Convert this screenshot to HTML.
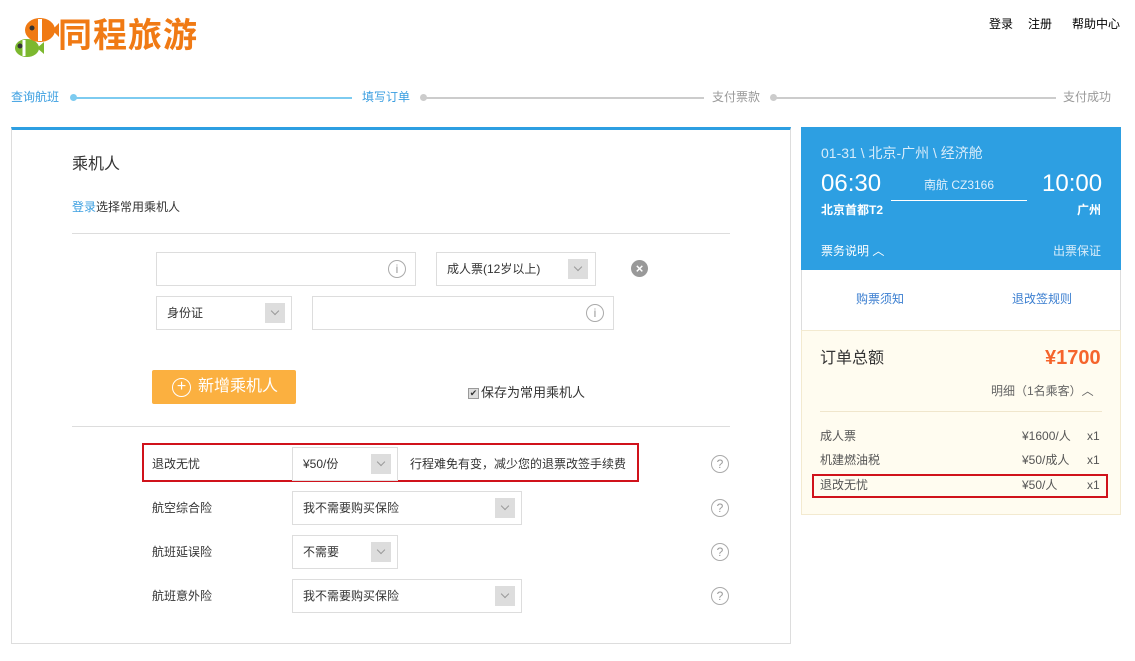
<!DOCTYPE html>
<html><head><meta charset="utf-8"><style>
*{margin:0;padding:0;box-sizing:border-box}
body{width:1135px;height:661px;background:#fff;font-family:"Liberation Sans","Noto Sans CJK SC",sans-serif;font-size:12px;color:#333;position:relative;overflow:hidden}
.a{position:absolute;white-space:nowrap;line-height:16px}
.box{position:absolute;border:1px solid #ddd;background:#fff}
.dd{position:absolute;width:20px;height:20px;background:#ddd}
.dd:after{content:"";position:absolute;left:7px;top:5px;width:5px;height:5px;border-right:1px solid #999;border-bottom:1px solid #999;transform:rotate(45deg)}
.ic{position:absolute;width:18px;height:18px;border:1px solid #aaa;border-radius:50%;color:#999;font-size:12px;text-align:center;line-height:16px}
</style></head><body>
<!-- logo -->
<svg class="a" style="left:10px;top:12px" width="50" height="48" viewBox="0 0 50 48">
<ellipse cx="17" cy="36" rx="12" ry="9" fill="#7cb82f"/><path d="M27 36l7-6v12z" fill="#7cb82f"/>
<path d="M14 28v16" stroke="#fff" stroke-width="3"/>
<circle cx="10" cy="34" r="2.5" fill="#333"/>
<ellipse cx="30" cy="18" rx="15" ry="12" fill="#f07a14"/><path d="M42 18l7-7v14z" fill="#f07a14"/>
<path d="M30 7v22" stroke="#fff" stroke-width="4"/><circle cx="22" cy="16" r="2.5" fill="#333"/>
</svg>
<div class="a" style="left:58px;top:16px;font-size:34px;line-height:40px;font-weight:bold;color:#f07a14;letter-spacing:1px">同程旅游</div>
<div class="a" style="left:989px;top:16px;font-size:12px;color:#000">登录</div>
<div class="a" style="left:1028px;top:16px;font-size:12px;color:#000">注册</div>
<div class="a" style="left:1072px;top:16px;font-size:12px;color:#000">帮助中心</div>
<!-- progress -->
<div class="a" style="left:11px;top:89px;color:#3a9ee0">查询航班</div>
<div class="a" style="left:70px;top:94px;width:7px;height:7px;border-radius:50%;background:#7dcbf0"></div>
<div class="a" style="left:74px;top:97px;width:278px;height:2px;background:#7dcbf0"></div>
<div class="a" style="left:362px;top:89px;color:#3a9ee0">填写订单</div>
<div class="a" style="left:420px;top:94px;width:7px;height:7px;border-radius:50%;background:#ccc"></div>
<div class="a" style="left:424px;top:97px;width:280px;height:2px;background:#ccc"></div>
<div class="a" style="left:712px;top:89px;color:#999">支付票款</div>
<div class="a" style="left:770px;top:94px;width:7px;height:7px;border-radius:50%;background:#ccc"></div>
<div class="a" style="left:774px;top:97px;width:282px;height:2px;background:#ccc"></div>
<div class="a" style="left:1063px;top:89px;color:#999">支付成功</div>
<!-- main panel -->
<div class="a" style="left:11px;top:127px;width:780px;height:517px;border:1px solid #ddd;border-top:3px solid #2d9fe2"></div>
<div class="a" style="left:72px;top:155px;font-size:16px;line-height:20px;color:#333">乘机人</div>
<div class="a" style="left:72px;top:199px;"><span style="color:#3a9ee0">登录</span>选择常用乘机人</div>
<div class="a" style="left:72px;top:233px;width:658px;height:1px;background:#ddd"></div>
<div class="box" style="left:156px;top:252px;width:260px;height:34px"></div>
<div class="ic" style="left:388px;top:260px">i</div>
<div class="box" style="left:436px;top:252px;width:160px;height:34px"></div>
<div class="a" style="left:447px;top:261px">成人票(12岁以上)</div>
<div class="dd" style="left:568px;top:259px"></div>
<div class="a" style="left:631px;top:260px;width:17px;height:17px;border-radius:50%;background:#999;color:#fff;font-size:13px;font-weight:bold;text-align:center;line-height:17px">×</div>
<div class="box" style="left:156px;top:296px;width:136px;height:34px"></div>
<div class="a" style="left:167px;top:305px">身份证</div>
<div class="dd" style="left:265px;top:303px"></div>
<div class="box" style="left:312px;top:296px;width:302px;height:34px"></div>
<div class="ic" style="left:586px;top:304px">i</div>
<div class="a" style="left:152px;top:370px;width:144px;height:34px;background:#fbb040;border-radius:2px;color:#fff;font-size:16px;line-height:34px;padding-left:46px">新增乘机人</div>
<div class="a" style="left:172px;top:378px;width:19px;height:19px;border:1.5px solid #fff;border-radius:50%;color:#fff;font-size:16px;text-align:center;line-height:15px">+</div>
<div class="a" style="left:468px;top:388px;width:11px;height:11px;background:#ddd;border:1px solid #999;font-size:9px;line-height:9px;text-align:center">✔</div>
<div class="a" style="left:481px;top:385px;font-size:13px">保存为常用乘机人</div>
<div class="a" style="left:72px;top:426px;width:658px;height:1px;background:#ddd"></div>
<!-- insurance -->
<div class="a" style="left:142px;top:443px;width:497px;height:39px;border:2px solid #d0121b"></div>
<div class="a" style="left:152px;top:456px">退改无忧</div>
<div class="box" style="left:292px;top:447px;width:106px;height:34px"></div>
<div class="a" style="left:303px;top:456px">¥50/份</div>
<div class="dd" style="left:371px;top:454px"></div>
<div class="a" style="left:410px;top:456px">行程难免有变，减少您的退票改签手续费</div>
<div class="ic" style="left:711px;top:455px">?</div>
<div class="a" style="left:152px;top:500px">航空综合险</div>
<div class="box" style="left:292px;top:491px;width:230px;height:34px"></div>
<div class="a" style="left:303px;top:500px">我不需要购买保险</div>
<div class="dd" style="left:495px;top:498px"></div>
<div class="ic" style="left:711px;top:499px">?</div>
<div class="a" style="left:152px;top:544px">航班延误险</div>
<div class="box" style="left:292px;top:535px;width:106px;height:34px"></div>
<div class="a" style="left:303px;top:544px">不需要</div>
<div class="dd" style="left:371px;top:542px"></div>
<div class="ic" style="left:711px;top:543px">?</div>
<div class="a" style="left:152px;top:588px">航班意外险</div>
<div class="box" style="left:292px;top:579px;width:230px;height:34px"></div>
<div class="a" style="left:303px;top:588px">我不需要购买保险</div>
<div class="dd" style="left:495px;top:586px"></div>
<div class="ic" style="left:711px;top:587px">?</div>
<!-- right panel -->
<div class="a" style="left:801px;top:127px;width:320px;height:143px;background:#2d9fe2"></div>
<div class="a" style="left:821px;top:144px;font-size:14px;line-height:18px;color:#d8ecfa">01-31 \ 北京-广州 \ 经济舱</div>
<div class="a" style="left:821px;top:170px;font-size:24px;line-height:28px;color:#fff">06:30</div>
<div class="a" style="left:1042px;top:170px;font-size:24px;line-height:28px;color:#fff">10:00</div>
<div class="a" style="left:924px;top:177px;color:#e0f0fc">南航 CZ3166</div>
<div class="a" style="left:891px;top:200px;width:136px;height:1px;background:#fff"></div>
<div class="a" style="left:821px;top:202px;color:#fff;font-weight:bold">北京首都T2</div>
<div class="a" style="left:1077px;top:202px;color:#fff;font-weight:bold">广州</div>
<div class="a" style="left:821px;top:243px;color:#fff">票务说明 ︿</div>
<div class="a" style="left:1053px;top:243px;color:#d8ecfa">出票保证</div>
<div class="a" style="left:801px;top:270px;width:320px;height:61px;border:1px solid #ddd;border-top:none"></div>
<div class="a" style="left:856px;top:291px;color:#3a7ed0">购票须知</div>
<div class="a" style="left:1012px;top:291px;color:#3a7ed0">退改签规则</div>
<div class="a" style="left:801px;top:330px;width:320px;height:185px;background:#fffcf0;border:1px solid #f3ead0"></div>
<div class="a" style="left:820px;top:349px;font-size:16px;line-height:20px;color:#333">订单总额</div>
<div class="a" style="left:1045px;top:346px;font-size:20px;line-height:24px;font-weight:bold;color:#f5642c">¥1700</div>
<div class="a" style="left:991px;top:383px;color:#666">明细（1名乘客）︿</div>
<div class="a" style="left:820px;top:411px;width:282px;height:1px;background:#f0e6cc"></div>
<div class="a" style="left:820px;top:428px;color:#555">成人票</div><div class="a" style="left:1022px;top:428px;color:#555">¥1600/人</div><div class="a" style="left:1087px;top:428px;color:#555">x1</div>
<div class="a" style="left:820px;top:452px;color:#555">机建燃油税</div><div class="a" style="left:1022px;top:452px;color:#555">¥50/成人</div><div class="a" style="left:1087px;top:452px;color:#555">x1</div>
<div class="a" style="left:812px;top:474px;width:296px;height:24px;border:2px solid #d0121b"></div>
<div class="a" style="left:820px;top:477px;color:#555">退改无忧</div><div class="a" style="left:1022px;top:477px;color:#555">¥50/人</div><div class="a" style="left:1087px;top:477px;color:#555">x1</div>
</body></html>
